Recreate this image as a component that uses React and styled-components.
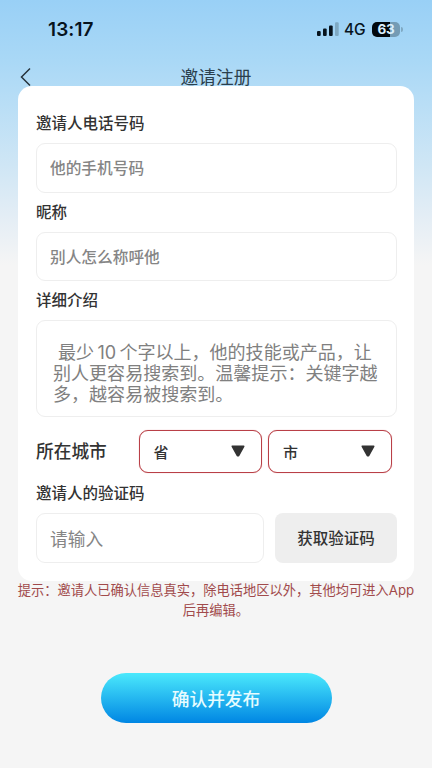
import React from 'react';
import styled, { createGlobalStyle } from 'styled-components';

const GlobalStyle = createGlobalStyle`
  * { box-sizing: border-box; }
  body { margin: 0; background: #f5f5f5; }
  input, textarea, button { font: inherit; outline: none; }
`;

const Screen = styled.div`
  width: 432px;
  height: 768px;
  overflow: hidden;
  display: flex;
  flex-direction: column;
  font-family: 'Noto Sans CJK SC', sans-serif;
  color: #333;
  background: linear-gradient(180deg, #99d0f6 0, #a9d8f6 60px, #b9def6 105px, #cfe6f5 165px, #e3edf5 215px, #f5f5f5 265px);
`;

const StatusBar = styled.header`
  height: 58px;
  padding: 0 29px 0 48px;
  display: flex;
  align-items: center;
  justify-content: space-between;
  font-family: Inter, sans-serif;
  color: #07131d;
`;

const Clock = styled.time`
  font-size: 19px;
  font-weight: 600;
  letter-spacing: 0.1px;
`;

const StatusIcons = styled.div`
  display: flex;
  align-items: center;
`;

const Network = styled.span`
  width: 28px;
  margin-left: 5px;
  padding-top: 1px;
  font-size: 15.5px;
  font-weight: 500;
  letter-spacing: -0.2px;
  line-height: 20px;
`;

const Battery = styled.div`
  width: 28px;
  height: 15px;
  border-radius: 5px;
  display: flex;
  align-items: center;
  justify-content: center;
  background: linear-gradient(90deg, #02080d 63%, #749bb4 63%);
  color: #d9effc;
  font-size: 13.5px;
  font-weight: 700;
  letter-spacing: -0.3px;
  line-height: 15px;
`;

const BatteryTip = styled.span`
  width: 2px;
  height: 5px;
  margin-left: 1px;
  border-radius: 0 2px 2px 0;
  background: #7fa9c3;
`;

const NavBar = styled.nav`
  height: 28px;
  padding: 0 18px;
  display: grid;
  grid-template-columns: 24px 1fr 24px;
  align-items: center;
`;

const BackButton = styled.button`
  width: 16px;
  height: 20px;
  padding: 0;
  border: 0;
  display: flex;
  margin-top: 7px;
  background: none;
`;

const Title = styled.h1`
  margin: 6px 0 0;
  text-align: center;
  font-size: 17.7px;
  font-weight: 400;
  line-height: 24px;
  color: #2b3f4d;
`;

const Card = styled.form`
  margin: 0 18px;
  height: 494.5px;
  padding: 24px 18px 0;
  border-radius: 14px;
  background: #fff;
  flex-shrink: 0;
`;

const Label = styled.label`
  display: block;
  height: 24px;
  margin: ${(p) => p.$top || 0}px 0 9px;
  font-size: 15.5px;
  font-weight: 500;
  line-height: 24px;
  color: #333;
`;

const Input = styled.input`
  display: block;
  width: ${(p) => p.$width || 360.5}px;
  height: 49.5px;
  padding: 0 13px;
  border: 1px solid #eee;
  border-radius: 9px;
  background: #fff;
  font-size: ${(p) => (p.$large ? 17.7 : 15.7)}px;
  font-weight: ${(p) => (p.$large ? 400 : 500)};
  &::placeholder { color: #858585; opacity: 1; }
`;

const Description = styled.textarea`
  display: block;
  width: 360.5px;
  height: 97px;
  padding: 21px 13px 0 16px;
  border: 1px solid #eee;
  border-radius: 9px;
  resize: none;
  overflow: hidden;
  background: #fff;
  font-family: Inter, 'Noto Sans CJK SC', sans-serif;
  font-size: 18.05px;
  line-height: 21.2px;
  &::placeholder { color: #808080; opacity: 1; }
`;

const CityRow = styled.div`
  height: 43px;
  margin-top: 13px;
  display: flex;
  align-items: center;
  gap: 6px;
`;

const CityLabel = styled.span`
  width: 96.5px;
  padding-bottom: 3px;
  font-size: 17.7px;
  font-weight: 500;
`;

const CitySelect = styled.button`
  width: 123.5px;
  height: 43px;
  padding: 0 16px 1px 14px;
  border: 1px solid #b94047;
  border-radius: 9px;
  display: flex;
  align-items: center;
  justify-content: space-between;
  background: #fff;
  box-shadow: 0 0 1px #d9898d;
  color: #333;
  font-size: 15px;
  font-weight: 500;
`;

const CodeRow = styled.div`
  display: flex;
  justify-content: space-between;
`;

const CodeButton = styled.button`
  width: 122px;
  height: 50px;
  padding: 0 0 2px;
  margin-right: -1px;
  border: 0;
  border-radius: 8px;
  background: #eee;
  color: #333;
  font-size: 15.5px;
  font-weight: 500;
`;

const Hint = styled.p`
  margin: -1px 10px 0;
  text-align: center;
  font-family: Inter, 'Noto Sans CJK SC', sans-serif;
  font-size: 13.25px;
  line-height: 20px;
  color: #a14a4b;
`;

const SubmitButton = styled.button`
  width: 231px;
  height: 50px;
  margin: 53.5px auto 0;
  padding: 0;
  border: 0;
  border-radius: 25px;
  background: linear-gradient(180deg, #4be9fc 0%, #0086e3 100%);
  color: #e6fcff;
  font-size: 17.7px;
  font-weight: 500;
`;

const Signal = () => (
  <svg width="22" height="14" viewBox="0 0 22 14">
    <rect x="0" y="9" width="3.7" height="5" rx="1.1" fill="#07131d" />
    <rect x="6" y="6.5" width="3.7" height="7.5" rx="1.1" fill="#07131d" />
    <rect x="12" y="3.5" width="3.7" height="10.5" rx="1.1" fill="#07131d" />
    <rect x="18" y="0.3" width="3.7" height="13.7" rx="1.1" fill="#7fa9c3" />
  </svg>
);

const Chevron = () => (
  <svg width="16" height="20" viewBox="0 0 16 20" fill="none" stroke="#26333c" strokeWidth="1.5">
    <path d="M12 1.5 3.5 10 12 18.5" />
  </svg>
);

const Caret = () => (
  <svg width="14" height="12" viewBox="0 0 14 12" fill="#333" stroke="#333" strokeWidth="1.6" strokeLinejoin="round">
    <path d="M1.3 1.3h11.4L7.6 10.6h-1.2Z" />
  </svg>
);

export default function App() {
  return (
    <Screen>
      <GlobalStyle />
      <StatusBar>
        <Clock>13:17</Clock>
        <StatusIcons>
          <Signal />
          <Network>4G</Network>
          <Battery>63</Battery>
          <BatteryTip />
        </StatusIcons>
      </StatusBar>
      <NavBar>
        <BackButton type="button" aria-label="返回"><Chevron /></BackButton>
        <Title>邀请注册</Title>
      </NavBar>
      <Card>
        <Label htmlFor="phone">邀请人电话号码</Label>
        <Input id="phone" placeholder="他的手机号码" />
        <Label htmlFor="nickname" $top={6}>昵称</Label>
        <Input id="nickname" placeholder="别人怎么称呼他" />
        <Label htmlFor="intro" $top={6}>详细介绍</Label>
        <Description id="intro" placeholder={' 最少\u200910\u2009个字以上，他的技能或产品，让别人更容易搜索到。温馨提示：关键字越多，越容易被搜索到。'} />
        <CityRow>
          <CityLabel>所在城市</CityLabel>
          <CitySelect type="button">省<Caret /></CitySelect>
          <CitySelect type="button">市<Caret /></CitySelect>
        </CityRow>
        <Label htmlFor="code" $top={7}>邀请人的验证码</Label>
        <CodeRow>
          <Input id="code" placeholder="请输入" $width={228} $large />
          <CodeButton type="button">获取验证码</CodeButton>
        </CodeRow>
      </Card>
      <Hint>提示：邀请人已确认信息真实，除电话地区以外，其他均可进入App<br />后再编辑。</Hint>
      <SubmitButton type="button">确认并发布</SubmitButton>
    </Screen>
  );
}
